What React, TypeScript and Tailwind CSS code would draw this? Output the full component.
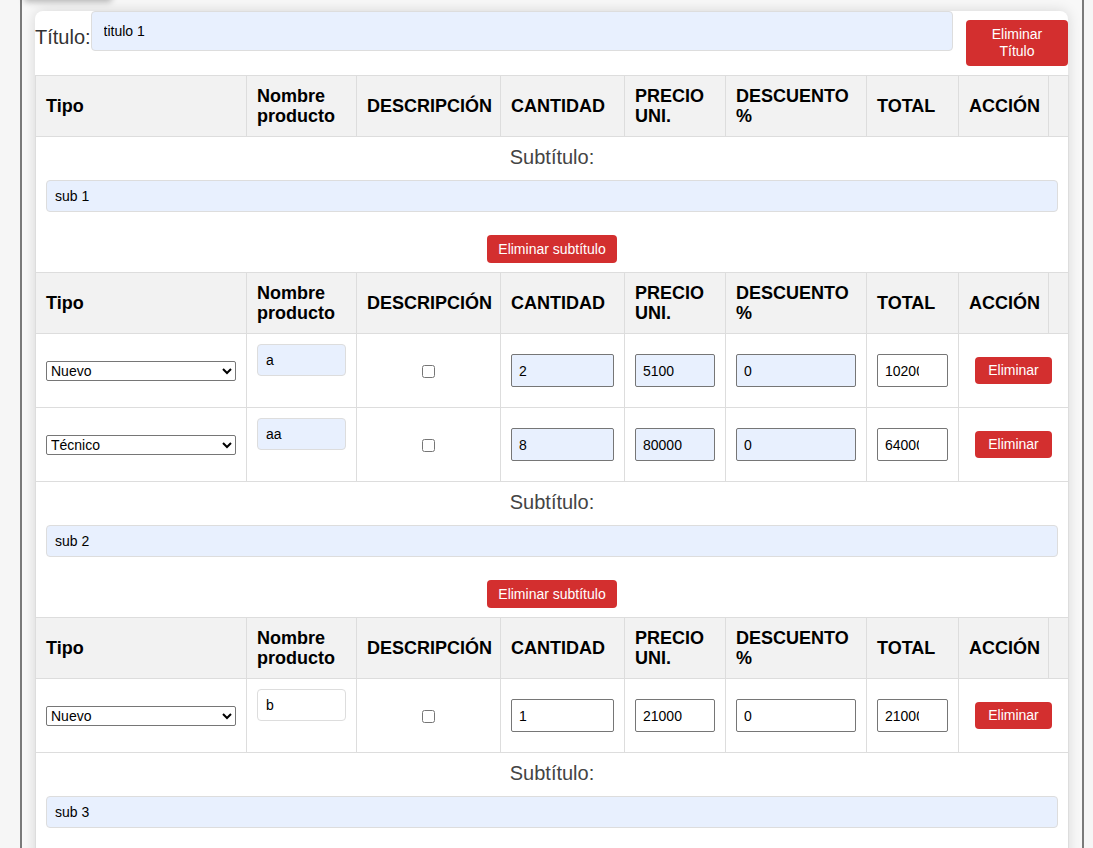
import React from "react";

type Row = {
  tipo: string;
  nombre: string;
  cantidad: string;
  precio: string;
  descuento: string;
  total: string;
  filled: boolean;
};

type Group = { subtitulo: string; rows: Row[] };

const groups: Group[] = [
  {
    subtitulo: "sub 1",
    rows: [
      { tipo: "Nuevo", nombre: "a", cantidad: "2", precio: "5100", descuento: "0", total: "10200", filled: true },
      { tipo: "Técnico", nombre: "aa", cantidad: "8", precio: "80000", descuento: "0", total: "640000", filled: true },
    ],
  },
  {
    subtitulo: "sub 2",
    rows: [{ tipo: "Nuevo", nombre: "b", cantidad: "1", precio: "21000", descuento: "0", total: "21000", filled: false }],
  },
  { subtitulo: "sub 3", rows: [] },
];

const headers = ["Tipo", "Nombre producto", "DESCRIPCIÓN", "CANTIDAD", "PRECIO UNI.", "DESCUENTO %", "TOTAL", "ACCIÓN", ""];

function HeaderRow() {
  return (
    <tr className="h-[61px]">
      {headers.map((h, i) => (
        <th
          key={i}
          className="border border-[#ddd] bg-[#f2f2f2] px-[10px] py-0 text-left align-middle text-[18px] font-bold leading-[20px] text-black"
        >
          {h}
        </th>
      ))}
    </tr>
  );
}

function SubtitleRow({ value }: { value: string }) {
  return (
    <tr>
      <td colSpan={9} className="border border-[#ddd] px-[10px] pt-[9px] pb-[9px]">
        <div className="text-center text-[20px] leading-[23px] text-[#444]">Subtítulo:</div>
        <input
          defaultValue={value}
          className="mt-[11px] block h-[32px] w-full rounded-[4px] border border-[#ddd] bg-[#e8f0fe] px-[8px] text-[14px] text-black outline-none"
        />
        <div className="mt-[23px] flex justify-center">
          <button className="h-[28px] rounded-[4px] bg-[#d32f2f] px-[11px] text-[14px] text-white">Eliminar subtítulo</button>
        </div>
      </td>
    </tr>
  );
}

function ProductRow({ row }: { row: Row }) {
  const fill = row.filled ? "bg-[#e8f0fe]" : "bg-white";
  const num = "block h-[33px] w-full rounded-[2px] border border-[#767676] pl-[7px] pr-[13px] text-[14px] text-black outline-none";
  return (
    <tr className="h-[74px]">
      <td className="border border-[#ddd] px-[10px] align-middle">
        <select
          defaultValue={row.tipo}
          className="block h-[20px] w-full rounded-[2px] border border-[#767676] bg-white text-[14px] text-black"
        >
          <option>Nuevo</option>
          <option>Técnico</option>
        </select>
      </td>
      <td className="border border-[#ddd] px-[10px] pt-[10px] align-top">
        <input
          defaultValue={row.nombre}
          className={`block h-[32px] w-full rounded-[4px] border border-[#ddd] px-[8px] text-[14px] text-black outline-none ${fill}`}
        />
      </td>
      <td className="border border-[#ddd] px-[10px] text-center align-middle">
        <input type="checkbox" className="m-0 align-middle" />
      </td>
      <td className="border border-[#ddd] px-[10px] align-middle">
        <input type="number" defaultValue={row.cantidad} className={`${num} ${fill}`} />
      </td>
      <td className="border border-[#ddd] px-[10px] align-middle">
        <input type="number" defaultValue={row.precio} className={`${num} ${fill}`} />
      </td>
      <td className="border border-[#ddd] px-[10px] align-middle">
        <input type="number" defaultValue={row.descuento} className={`${num} ${fill}`} />
      </td>
      <td className="border border-[#ddd] px-[10px] align-middle">
        <input type="number" defaultValue={row.total} className={`${num} bg-white`} />
      </td>
      <td className="border border-r-0 border-[#ddd] px-[10px] align-middle">
        <button className="ml-[6px] h-[27px] w-[77px] rounded-[4px] bg-[#d32f2f] text-[14px] text-white">Eliminar</button>
      </td>
      <td className="border border-l-0 border-[#ddd]" />
    </tr>
  );
}

export default function App() {
  return (
    <div className="min-h-[848px] bg-[#f6f6f6] font-['Liberation_Sans',Arial,sans-serif]">
      <div className="relative ml-[20px] min-h-[848px] w-[1064px] border-x-2 border-[#7a7a7a] bg-[#f8f8f8] px-[13px] pt-[11px]">
        {/* bottom edge of a floating box above the view */}
        <div className="absolute left-[2px] top-[-45px] h-[45px] w-[88px] rounded-b-[4px] bg-[#f4f4f4] shadow-[0_2px_6px_rgba(0,0,0,0.28)]" />

        <div className="w-[1033px] rounded-t-[8px] bg-white shadow-[0_0_14px_rgba(0,0,0,0.14)]">
          <div className="mb-[9px] flex items-start">
            <label className="mt-[15px] text-[20px] leading-[23px] text-[#333]">Título:</label>
            <input
              defaultValue="titulo 1"
              className="h-[40px] flex-1 rounded-[4px] border border-[#ddd] bg-[#e8f0fe] px-[12px] text-[14px] text-black outline-none"
            />
            <button className="ml-[13px] mt-[9px] h-[46px] w-[102px] rounded-[4px] bg-[#d32f2f] text-[14px] leading-[17px] text-white">
              Eliminar
              <br />
              Título
            </button>
          </div>

          <table className="w-[1033px] table-fixed border-collapse">
            <colgroup>
              <col className="w-[211px]" />
              <col className="w-[110px]" />
              <col className="w-[144px]" />
              <col className="w-[124px]" />
              <col className="w-[101px]" />
              <col className="w-[141px]" />
              <col className="w-[92px]" />
              <col className="w-[90px]" />
              <col className="w-[20px]" />
            </colgroup>
            <tbody>
              <HeaderRow />
              {groups.map((g, gi) => (
                <React.Fragment key={gi}>
                  <SubtitleRow value={g.subtitulo} />
                  {gi < groups.length - 1 ? <HeaderRow /> : null}
                  {g.rows.map((r, ri) => (
                    <ProductRow key={ri} row={r} />
                  ))}
                </React.Fragment>
              ))}
            </tbody>
          </table>
        </div>
      </div>
    </div>
  );
}
